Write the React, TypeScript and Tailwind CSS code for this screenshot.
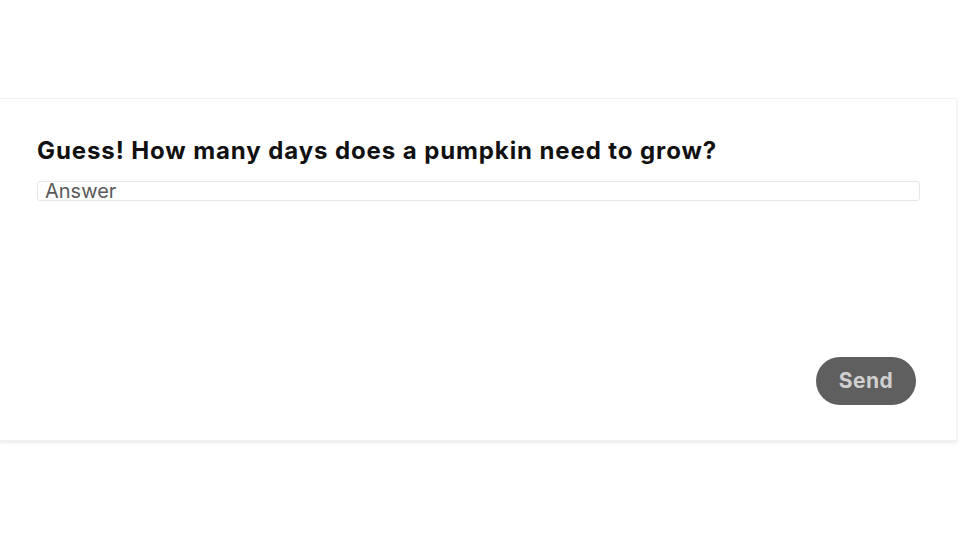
export default function App() {
  return (
    <div className="min-h-screen bg-white pt-[98px]">
      {/* Question card */}
      <div className="ml-[-1px] w-[958px] h-[343px] bg-white border border-[#f2f2f2] shadow-[0_2px_3px_rgba(0,0,0,0.08)] flex flex-col px-[37px] pt-[35px] pb-[35px]">
        <h1 className="text-[24px] leading-[34px] font-bold text-[#111] font-['Inter',sans-serif] tracking-[0.9px]">
          Guess! How many days does a pumpkin need to grow?
        </h1>
        <input
          type="text"
          placeholder="Answer"
          className="mt-[13px] w-[883px] h-[20px] border border-[#e6e6e6] rounded-[3px] px-[7px] text-[20px] leading-[20px] font-['Inter',sans-serif] text-[#333] placeholder:text-[#5a5a5a] outline-none"
        />
        <div className="flex-1" />
        <div className="flex justify-end pr-[3px]">
          <button className="w-[100px] h-[48px] rounded-full bg-[#5f5f5f] text-[#cfcfcf] text-[21px] font-bold font-['Inter',sans-serif] tracking-[0.5px]">
            Send
          </button>
        </div>
      </div>
    </div>
  );
}
